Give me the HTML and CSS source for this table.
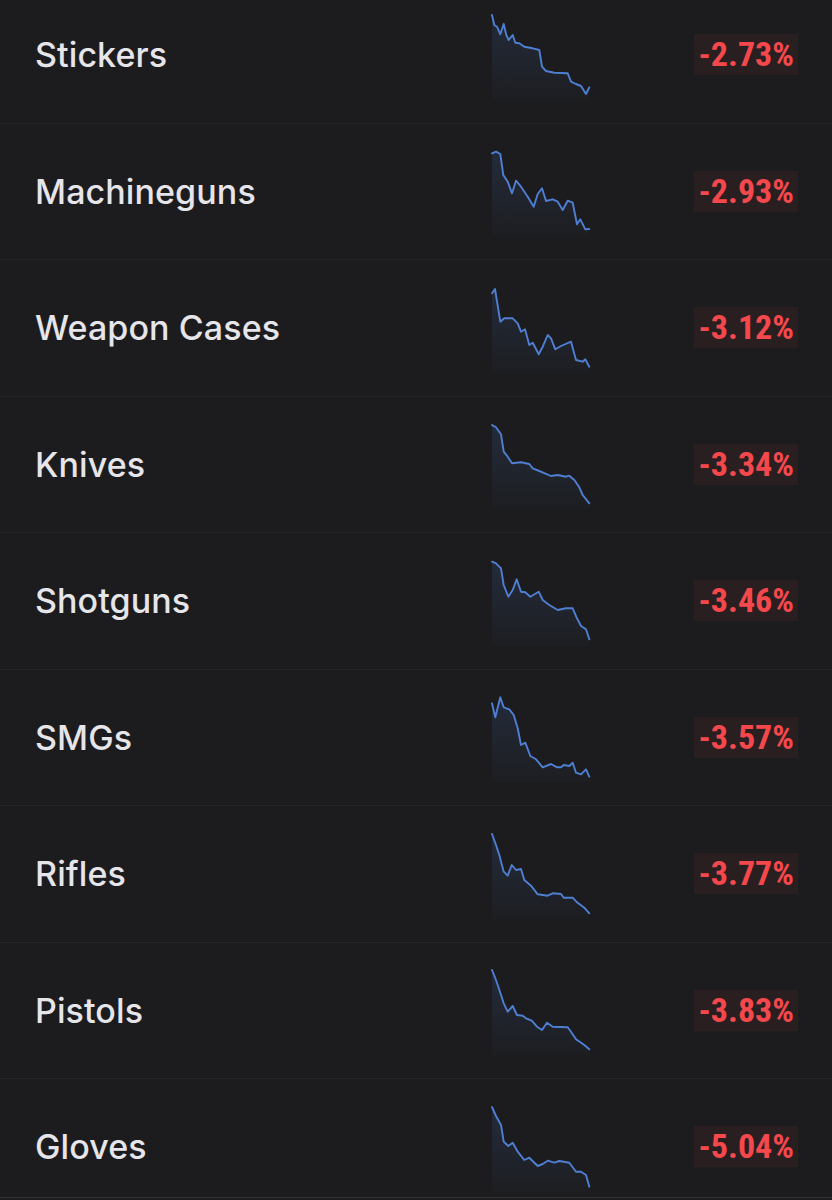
FILE: index.html
```html
<!DOCTYPE html>
<html lang="en">
<head>
<meta charset="utf-8">
<title>Categories</title>
<link rel="stylesheet" href="styles.css">
</head>
<body>
<svg class="defs" width="0" height="0" aria-hidden="true">
  <defs>
    <linearGradient id="fade" x1="0" y1="0" x2="0" y2="1">
      <stop offset="0" stop-color="#4a7bd0" stop-opacity="0.16"/>
      <stop offset="1" stop-color="#4a7bd0" stop-opacity="0.02"/>
    </linearGradient>
  </defs>
</svg>
<div class="list">
  <div class="row">
    <div class="name">Stickers</div>
    <svg class="spark" viewBox="0 0 100 85" width="100" height="85">
      <polygon class="area" points="1,85 1,0 3.3,10 6,11.7 9.3,19.3 12.7,9 15.3,20 17.7,25 21.7,20 24.3,27.7 28.3,28.3 33.3,31.7 41.7,33.3 48.3,35 51,51.7 55,56 63.3,57.7 76.7,58.3 80,66.7 85,69 90,71 95,79 98.3,72.3 98.3,85"/>
      <polyline class="line" points="1,0 3.3,10 6,11.7 9.3,19.3 12.7,9 15.3,20 17.7,25 21.7,20 24.3,27.7 28.3,28.3 33.3,31.7 41.7,33.3 48.3,35 51,51.7 55,56 63.3,57.7 76.7,58.3 80,66.7 85,69 90,71 95,79 98.3,72.3"/>
    </svg>
    <div class="change">-2.73%</div>
  </div>
  <div class="row">
    <div class="name">Machineguns</div>
    <svg class="spark" viewBox="0 0 100 85" width="100" height="85">
      <polygon class="area" points="1,85 1,2.3 5,0.7 9.3,3 12.3,24 16.7,30.7 21,42.3 25,29.7 30,35.7 36.7,45.7 42.7,55.7 46.7,43 51,37.3 55,50 61.7,48.3 66.7,50.7 71.7,59 76.7,49.7 81.7,51.7 86,73.3 89.3,68.3 94.3,78.3 98.3,78 98.3,85"/>
      <polyline class="line" points="1,2.3 5,0.7 9.3,3 12.3,24 16.7,30.7 21,42.3 25,29.7 30,35.7 36.7,45.7 42.7,55.7 46.7,43 51,37.3 55,50 61.7,48.3 66.7,50.7 71.7,59 76.7,49.7 81.7,51.7 86,73.3 89.3,68.3 94.3,78.3 98.3,78"/>
    </svg>
    <div class="change">-2.93%</div>
  </div>
  <div class="row">
    <div class="name">Weapon Cases</div>
    <svg class="spark" viewBox="0 0 100 85" width="100" height="85">
      <polygon class="area" points="1,85 1,5.3 4,1 9.3,33.7 13.3,30.3 21.7,30.3 26.7,35.3 30,43.7 34,41.3 38.3,57 41.7,54.7 47.7,66.3 51.7,58.7 56.7,47 60,50.3 64.3,61.3 70,58 80,53.7 85,72 91.7,73.7 94.3,71.3 98.3,78.7 98.3,85"/>
      <polyline class="line" points="1,5.3 4,1 9.3,33.7 13.3,30.3 21.7,30.3 26.7,35.3 30,43.7 34,41.3 38.3,57 41.7,54.7 47.7,66.3 51.7,58.7 56.7,47 60,50.3 64.3,61.3 70,58 80,53.7 85,72 91.7,73.7 94.3,71.3 98.3,78.7"/>
    </svg>
    <div class="change">-3.12%</div>
  </div>
  <div class="row">
    <div class="name">Knives</div>
    <svg class="spark" viewBox="0 0 100 85" width="100" height="85">
      <polygon class="area" points="1,85 1,1 5,3.3 10,10.3 12.7,27.7 16.7,32.7 21,39.3 30,38.3 38.3,40 41.7,44.3 48.3,47 60,52 66.7,51 75,52.7 78.3,51.7 83.3,56 88.3,63.3 91.7,71 98.3,79.3 98.3,85"/>
      <polyline class="line" points="1,1 5,3.3 10,10.3 12.7,27.7 16.7,32.7 21,39.3 30,38.3 38.3,40 41.7,44.3 48.3,47 60,52 66.7,51 75,52.7 78.3,51.7 83.3,56 88.3,63.3 91.7,71 98.3,79.3"/>
    </svg>
    <div class="change">-3.34%</div>
  </div>
  <div class="row">
    <div class="name">Shotguns</div>
    <svg class="spark" viewBox="0 0 100 85" width="100" height="85">
      <polygon class="area" points="1,85 1,0.7 5,2.3 10,7.3 12.7,24 17.3,35.7 21.7,29 25.7,18.3 30,30.7 34.3,31.3 39.3,35.7 47.7,30.7 51.7,39 58.3,44 66.7,49 75,47.3 81.7,47.3 86,57.3 90,65 95,68.3 98.3,78.3 98.3,85"/>
      <polyline class="line" points="1,0.7 5,2.3 10,7.3 12.7,24 17.3,35.7 21.7,29 25.7,18.3 30,30.7 34.3,31.3 39.3,35.7 47.7,30.7 51.7,39 58.3,44 66.7,49 75,47.3 81.7,47.3 86,57.3 90,65 95,68.3 98.3,78.3"/>
    </svg>
    <div class="change">-3.46%</div>
  </div>
  <div class="row">
    <div class="name">SMGs</div>
    <svg class="spark" viewBox="0 0 100 85" width="100" height="85">
      <polygon class="area" points="1,85 1,6.3 4.3,20.3 9.3,0.3 12.7,10.3 18.3,12.3 22.7,18 26.7,31.3 30,48 34.3,45.7 39.3,59 45,62.3 51.7,70.3 60,67 66,70.3 70,70.3 72.7,68 78.3,69 81.7,65.7 85,75.7 90,77.3 95,72.3 98.3,79.7 98.3,85"/>
      <polyline class="line" points="1,6.3 4.3,20.3 9.3,0.3 12.7,10.3 18.3,12.3 22.7,18 26.7,31.3 30,48 34.3,45.7 39.3,59 45,62.3 51.7,70.3 60,67 66,70.3 70,70.3 72.7,68 78.3,69 81.7,65.7 85,75.7 90,77.3 95,72.3 98.3,79.7"/>
    </svg>
    <div class="change">-3.57%</div>
  </div>
  <div class="row">
    <div class="name">Rifles</div>
    <svg class="spark" viewBox="0 0 100 85" width="100" height="85">
      <polygon class="area" points="1,85 1,0 5,11 8.3,21 12.7,37.7 16.7,41.7 20.7,31 25,36 30,35 33.3,46 40,51.7 46.7,60.3 56.7,61.7 61.7,59.3 70,60 72.7,63.7 81.7,63.7 86,68.3 93.3,73.7 98.3,79.3 98.3,85"/>
      <polyline class="line" points="1,0 5,11 8.3,21 12.7,37.7 16.7,41.7 20.7,31 25,36 30,35 33.3,46 40,51.7 46.7,60.3 56.7,61.7 61.7,59.3 70,60 72.7,63.7 81.7,63.7 86,68.3 93.3,73.7 98.3,79.3"/>
    </svg>
    <div class="change">-3.77%</div>
  </div>
  <div class="row">
    <div class="name">Pistols</div>
    <svg class="spark" viewBox="0 0 100 85" width="100" height="85">
      <polygon class="area" points="1,85 1,0 5,10 9.3,22.7 12.7,33.3 16.7,41.7 21.7,36 26,45 31.7,45.7 35,48.3 40.7,50.7 46,56.7 51,60 56,52.7 61.7,56.7 76.7,57.3 80,61.7 85,69.3 93.3,75 98.3,79.3 98.3,85"/>
      <polyline class="line" points="1,0 5,10 9.3,22.7 12.7,33.3 16.7,41.7 21.7,36 26,45 31.7,45.7 35,48.3 40.7,50.7 46,56.7 51,60 56,52.7 61.7,56.7 76.7,57.3 80,61.7 85,69.3 93.3,75 98.3,79.3"/>
    </svg>
    <div class="change">-3.83%</div>
  </div>
  <div class="row">
    <div class="name">Gloves</div>
    <svg class="spark" viewBox="0 0 100 85" width="100" height="85">
      <polygon class="area" points="1,85 1,0 5,9 10,18 12.7,34.7 17.3,39 21.7,35.7 26.7,44.7 33.3,53 38.3,50.7 46.7,59 51.7,57 56.7,53.7 63.3,55.7 68.3,54 78.3,55.7 85,64.7 90,64.7 95,68 98.3,79.7 98.3,85"/>
      <polyline class="line" points="1,0 5,9 10,18 12.7,34.7 17.3,39 21.7,35.7 26.7,44.7 33.3,53 38.3,50.7 46.7,59 51.7,57 56.7,53.7 63.3,55.7 68.3,54 78.3,55.7 85,64.7 90,64.7 95,68 98.3,79.7"/>
    </svg>
    <div class="change">-5.04%</div>
  </div>
</div>
<div class="bottom-edge"></div>
</body>
</html>
```
FILE: styles.css
```css
html, body {
  margin: 0;
  padding: 0;
  background: #1c1c1e;
  overflow: hidden;
}
body {
  font-family: Inter, "Noto Sans", "Liberation Sans", sans-serif;
  color: #e5e5ea;
}
.defs {
  position: absolute;
  width: 0;
  height: 0;
}
.list {
  margin-top: -13px;
}
.row {
  display: grid;
  grid-template-columns: 456px 100px 1fr;
  align-items: center;
  height: 135.5px;
  padding: 0 34px 0 35px;
  border-bottom: 1px solid #252527;
}
.name {
  font-size: 34px;
  font-weight: 500;
  letter-spacing: 0.1px;
}
.spark {
  display: block;
  margin-top: 5px;
  overflow: visible;
}
.area {
  fill: url(#fade);
}
.line {
  fill: none;
  stroke: #4f7fd3;
  stroke-width: 1.9;
  stroke-linejoin: round;
  stroke-linecap: round;
}
.change {
  justify-self: end;
  font-family: "Roboto Condensed", "DejaVu Sans Condensed", Roboto, sans-serif;
  font-stretch: condensed;
  font-weight: 700;
  font-size: 34px;
  line-height: 41px;
  padding: 0 4px 0 5px;
  color: #f4484d;
  background: #2a1f20;
}
.bottom-edge {
  position: fixed;
  left: 0;
  right: 0;
  bottom: 0;
  height: 2px;
  background: #1c1c1e;
  border-top: 1px solid #333335;
}
```
